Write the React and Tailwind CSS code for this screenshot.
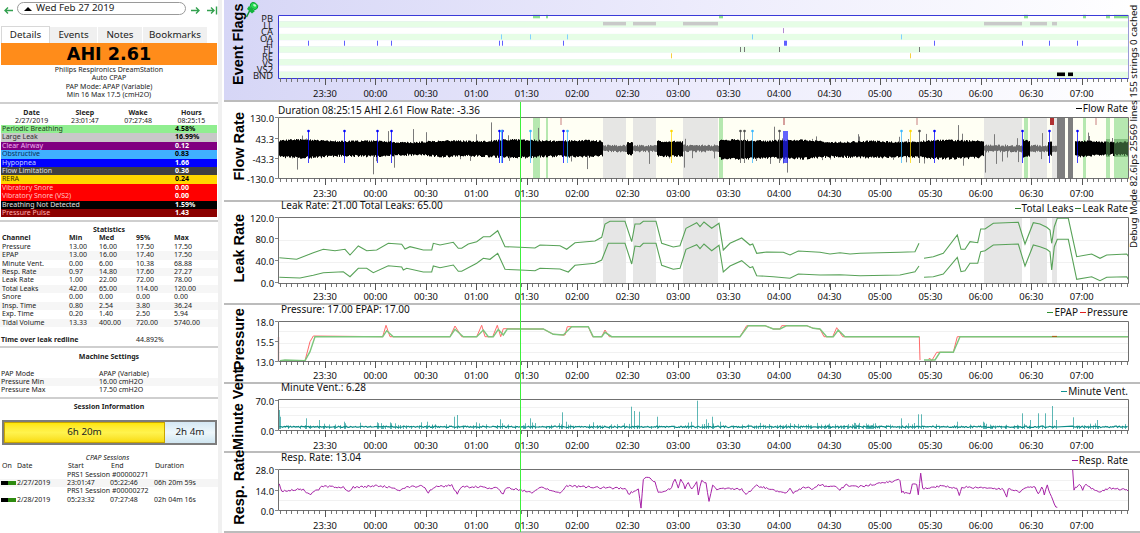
import { useMemo } from 'react';

// seeded random so the chart noise stays the same between runs
function rng(seed) {
  let a = seed;
  return () => {
    a = (a + 0x6d2b79f5) | 0;
    let t = Math.imul(a ^ (a >>> 15), 1 | a);
    t = (t + Math.imul(t ^ (t >>> 7), 61 | t)) ^ t;
    return ((t ^ (t >>> 14)) >>> 0) / 4294967296;
  };
}

// points read off 3x crops: flat [px, py, ...] -> page coords
const z = (ox, oy, arr) => {
  const out = [];
  for (let i = 0; i < arr.length; i += 2) out.push([ox + arr[i] / 3, oy + arr[i + 1] / 3]);
  return out;
};
const line = pts => 'M' + pts.map(p => `${p[0].toFixed(1)} ${p[1].toFixed(1)}`).join('L');

const TIMES = ['23:30', '00:00', '00:30', '01:00', '01:30', '02:00', '02:30', '03:00', '03:30', '04:00', '04:30', '05:00', '05:30', '06:00', '06:30', '07:00'];
const tx = i => 325 + 50.45 * i;
const L = 278, R = 1128;

const PB = [[533, 540], [546, 548], [719, 723], [1024, 1028], [1083, 1086], [1106, 1110], [1114, 1128]];
const LL = [[603, 626], [633, 656], [683, 718], [984, 1022], [1030, 1047], [1052, 1057]];
const BND = [[1057, 1065], [1068, 1073]];
const HYP = [308, 344, 377, 391, 499, 502, 563, 934, 1022, 1049, 1077];
const OA = [501, 530, 567, 752, 901];
const FL = [740, 744, 779, 919];
const RE = [671, 910];
const PP = [[561, 1], [784, 1.5], [917, 1], [1052, 4], [1096, 1]];

const inside = (x, ranges) => ranges.some(r => x >= r[0] && x <= r[1]);

function flowPaths() {
  const r = rng(7);
  let black = '', gray = '', spikes = '';
  for (let x = 279; x < R; x++) {
    if (inside(x, BND) || (x > 1057 && x < 1075 && r() < 0.85)) continue;
    const ll = inside(x, LL);
    const swell = 1 + 0.8 * Math.sin(x / 37) + 0.6 * Math.sin(x / 11.3);
    const extra = x > 720 && x < 980 ? 1.5 : 0;
    const up = ll ? 1.5 + r() * 2 : 5 + swell + r() * 1.8;
    const down = ll ? 1.5 + r() * 2 : 5 + swell + extra + r() * 2.4;
    const seg = `M${x + 0.5} ${(148 - up).toFixed(1)}V${(149 + down).toFixed(1)}`;
    if (ll) gray += seg; else black += seg;
    if (r() < 0.08) {
      const s = 9 + r() * r() * 20;
      spikes += r() < 0.55 ? `M${x + 0.5} 148V${(148 + s).toFixed(1)}` : `M${x + 0.5} 148V${(148 - s).toFixed(1)}`;
    }
  }
  return { black, gray, spikes };
}

const leakTop = [
  ...z(220, 200, [178, 173, 230, 178, 280, 158, 310, 148, 345, 152, 375, 148, 390, 165, 415, 138, 440, 152, 470, 150, 505, 130, 545, 133, 555, 147, 570, 140, 610, 150, 635, 150, 640, 130, 660, 135, 700, 127, 715, 145, 725, 145, 745, 132, 770, 125, 790, 110, 810, 110, 833, 92, 855, 140, 900, 142, 945, 144, 960, 135]),
  ...z(560, 100, [0, 437, 20, 448, 45, 428, 105, 423, 125, 412, 135, 372, 150, 364, 195, 364, 215, 425, 225, 372, 240, 372, 250, 364, 288, 364, 305, 430, 340, 441, 360, 437, 378, 385, 410, 368, 420, 380, 432, 366, 455, 385, 477, 370, 490, 450, 510, 430, 545, 414, 570, 435, 578, 432, 590, 460, 620, 456, 670, 457, 690, 465, 715, 453, 780, 457, 810, 462, 840, 458, 870, 462, 900, 460]),
  ...z(900, 200, [0, 157, 45, 155, 57, 130]),
];
const leakTop2 = z(900, 200, [72, 175, 100, 170, 130, 160, 172, 105, 183, 148, 195, 148, 210, 125, 233, 128, 242, 87, 255, 87, 280, 70, 355, 67, 375, 132, 400, 68, 420, 72, 440, 82, 450, 90, 455, 130, 463, 80, 472, 55, 505, 55, 530, 170, 575, 162, 600, 175, 620, 165, 680, 162, 686, 170]);
const leakLow = [
  ...z(220, 200, [178, 232, 240, 234, 280, 226, 310, 218, 370, 215, 390, 230, 415, 205, 440, 205, 460, 218, 505, 197, 545, 201, 550, 210, 560, 205, 610, 216, 635, 216, 640, 198, 660, 203, 700, 195, 715, 214, 725, 214, 770, 190, 790, 175, 810, 178, 833, 160, 855, 208, 900, 210, 945, 212, 960, 205]),
  ...z(560, 100, [0, 507, 25, 516, 45, 496, 105, 490, 125, 480, 145, 430, 195, 430, 215, 492, 225, 438, 240, 440, 250, 430, 288, 430, 305, 496, 340, 508, 360, 505, 378, 448, 410, 434, 420, 446, 432, 432, 455, 452, 477, 436, 490, 516, 510, 498, 545, 482, 570, 503, 578, 500, 590, 527, 640, 530, 690, 535, 715, 522, 780, 525, 840, 524, 900, 527]),
  ...z(900, 200, [0, 225, 45, 215, 57, 198]),
];
const leakLow2 = z(900, 200, [72, 232, 100, 230, 130, 222, 172, 172, 183, 215, 195, 212, 210, 190, 233, 190, 242, 155, 255, 152, 280, 135, 355, 132, 375, 198, 400, 135, 420, 140, 440, 148, 450, 155, 455, 210, 463, 140, 472, 118, 505, 118, 530, 238, 575, 230, 600, 242, 620, 232, 680, 230, 686, 240]);

const epap = [
  ...z(220, 200, [180, 482, 195, 480, 255, 482, 270, 455, 285, 410, 488, 410, 500, 392, 520, 410, 690, 410, 705, 388, 730, 410, 770, 410, 790, 390, 805, 410, 820, 410, 835, 388, 850, 405, 862, 387, 930, 387]),
  ...z(530, 305, [0, 72, 40, 72, 70, 88, 100, 90, 125, 65, 175, 65, 190, 95, 215, 95, 225, 82, 245, 95, 630, 95, 655, 62, 705, 62, 730, 72, 750, 72, 770, 62, 830, 62, 850, 70, 870, 72, 890, 95, 910, 95, 925, 75, 945, 95, 1168, 95]),
];
const epap2 = z(900, 200, [72, 480, 105, 480, 120, 457, 160, 457, 180, 410, 686, 410]);
const press = [
  ...z(220, 200, [255, 482, 270, 425, 280, 408, 488, 410, 498, 376, 510, 410, 690, 410, 705, 378, 725, 410, 770, 410, 785, 376, 795, 410, 818, 410, 832, 376, 842, 410, 850, 386, 930, 387]),
  ...z(530, 305, [0, 72, 40, 72, 70, 88, 105, 90, 112, 65, 175, 65, 188, 95, 215, 95, 225, 75, 238, 95, 630, 95, 650, 62, 705, 62, 730, 72, 750, 72, 755, 62, 830, 62, 850, 70, 870, 72, 882, 95, 908, 95, 920, 68, 938, 95, 1168, 95, 1170, 165]),
];
const press2 = z(900, 200, [85, 478, 90, 475, 95, 482, 110, 457, 160, 457, 172, 410, 686, 410]);

const ventSpikes = [
  ...z(220, 370, [178, 120, 181, 140, 257, 145, 298, 150, 372, 155, 375, 160, 470, 157, 512, 160, 540, 165, 603, 157, 622, 155, 703, 140, 710, 135, 840, 148, 845, 160, 915, 160, 930, 145]),
  ...z(560, 370, [5, 127, 18, 155, 100, 157, 213, 110, 222, 123, 238, 125, 292, 140, 410, 92, 438, 148, 455, 140, 480, 155]),
  ...z(900, 370, [2, 145, 25, 160, 55, 133, 62, 133, 172, 155, 248, 155, 365, 130, 390, 150, 415, 130, 435, 130, 455, 108, 468, 150, 520, 142, 590, 150, 685, 148]),
];

function ventPaths() {
  const r = rng(21);
  let base = '', bars = '';
  for (let x = 279; x < R; x++) {
    if (x > 1056 && x < 1072) continue;
    const y = 426.8 + (r() - 0.5) * 1.4;
    base += `${base ? 'L' : 'M'}${x + 0.5} ${y.toFixed(1)}`;
    const dense = x > 745 && x < 880 ? 0.45 : 0.16;
    if (r() < dense) bars += `M${x + 0.5} 429V${(426 - r() * r() * 5).toFixed(1)}`;
  }
  ventSpikes.forEach(p => { bars += `M${Math.round(p[0]) + 0.5} 429V${p[1].toFixed(1)}`; });
  return { base, bars };
}

function jitter(pts, seed, amt) {
  const r = rng(seed);
  const out = [];
  for (let i = 0; i < pts.length - 1; i++) {
    const [x0, y0] = pts[i], [x1, y1] = pts[i + 1];
    const n = Math.max(1, Math.round((x1 - x0) / 1.5));
    for (let k = 0; k < n; k++) {
      const t = k / n;
      out.push([x0 + (x1 - x0) * t, y0 + (y1 - y0) * t + (r() - 0.5) * amt]);
    }
  }
  out.push(pts[pts.length - 1]);
  return out;
}

const resp1 = [
  ...z(220, 370, [178, 340, 185, 365, 215, 360, 250, 358, 268, 375, 310, 348, 370, 352, 385, 365, 400, 352, 470, 348, 520, 352, 540, 362, 560, 352, 610, 348, 625, 368, 640, 352, 695, 346, 712, 372, 725, 350, 790, 352, 830, 355, 850, 372, 860, 352, 935, 368, 960, 352]),
  ...z(560, 370, [0, 370, 20, 348, 100, 352, 195, 355, 205, 372, 235, 358, 243, 412, 250, 330, 265, 320, 285, 335, 295, 370, 330, 358, 345, 330, 355, 352, 362, 325, 375, 355, 385, 335, 395, 360, 410, 332, 415, 375, 425, 330, 438, 340, 447, 395, 458, 345, 470, 360, 490, 355, 545, 358, 558, 372, 590, 348, 620, 355, 675, 370, 690, 355, 700, 368, 740, 350, 760, 358, 775, 345, 830, 350, 840, 358, 860, 345, 900, 350]),
  ...z(900, 370, [0, 330, 5, 365, 30, 372, 37, 345, 50, 345, 55, 375, 62, 310, 68, 355, 120, 348, 170, 355, 178, 375, 185, 352, 240, 352, 310, 358, 320, 378, 325, 358, 360, 365, 375, 352, 405, 348, 415, 372, 425, 350, 433, 372, 442, 345, 450, 370, 463, 405, 472, 412]),
];
const resp2 = z(900, 370, [518, 302, 522, 358, 538, 342, 548, 358, 558, 342, 570, 352, 595, 365, 630, 355, 680, 360, 686, 365]);

function Frame({ top, bottom, labelY, stroke = '#707070' }) {
  const minors = [];
  for (let x = tx(0) - 8 * 5.605; x < R + 1; x += 5.605) minors.push(x);
  return (
    <g>
      <path d={`M${L + 0.5} ${top + 0.5}H${R + 0.5}V${bottom + 0.5}H${L + 0.5}Z`} fill="none" stroke={stroke} strokeWidth="1" />
      <path d={minors.map(x => `M${Math.round(x) + 0.5} ${bottom}v4`).join('')} stroke="#666" strokeWidth="0.9" />
      <path d={TIMES.map((_, i) => `M${Math.round(tx(i)) + 0.5} ${bottom}v7`).join('')} stroke="#555" strokeWidth="1" />
      {TIMES.map((t, i) => (
        <text key={t + i} x={tx(i)} y={labelY} textAnchor="middle" dominantBaseline="middle" fontSize="9.4" fill="#111">{t}</text>
      ))}
    </g>
  );
}

function YLabels({ items }) {
  return items.map(([t, y]) => (
    <g key={t}>
      <text x="274" y={y} textAnchor="end" dominantBaseline="middle" fontSize="9.4" fill="#111">{t}</text>
      <path d={`M275 ${y - 1.5}h3`} stroke="#666" strokeWidth="0.8" />
    </g>
  ));
}

function Grid({ ys }) {
  return <path d={ys.map(y => `M${L} ${y + 0.5}H${R}`).join('')} stroke="#f1f1f1" strokeWidth="1" />;
}

function EventFlags() {
  const rows = ['PB', 'LL', 'CA', 'OA', 'H', 'FL', 'RE', 'VS', 'VS2', 'BND'];
  const labelY = [19.5, 26, 32.3, 39, 45, 50.7, 57.3, 64, 70.7, 76.7];
  const rh = 6.3;
  const rowY = i => 15 + i * rh;
  const marks = (xs, row, color) => xs.map(x => <rect key={`${row}-${x}`} x={x} y={rowY(row) + 0.5} width="1" height="5" fill={color} />);
  const spans = (rs, row, color, y = 0.2, h = 4) => rs.map(r => <rect key={`${row}-${r[0]}`} x={r[0]} y={rowY(row) + y} width={r[1] - r[0]} height={h} fill={color} />);
  return (
    <svg width="886" height="100" viewBox="254 0 886 100" className="block overflow-visible">
      {rows.map((_, i) => <rect key={i} x={L} y={rowY(i)} width={R - L} height={rh} fill={i % 2 ? '#e6fde6' : '#ffffff'} />)}
      {spans(PB, 0, '#8fe08f', -0.2, 3.5)}
      {spans(LL, 1, '#c9c9c9', 0.6, 3.5)}
      {marks([783], 2, '#b08ad0')}
      {marks(OA, 3, '#7fd0ff')}
      {marks(HYP, 4, '#5f5fff')}
      <rect x="784" y={rowY(4) + 0.5} width="3" height="5" fill="#5f5fff" />
      {marks(FL, 5, '#777')}
      {marks(RE, 6, '#f5d040')}
      {spans(BND, 9, '#000', 0.8, 3.6)}
      <path d={`M${L + 0.5} 78V15.5H${R}`} fill="none" stroke="#3a3ad8" strokeWidth="1" />
      <path d={`M${R + 0.5} 15V78`} stroke="#9a9ad8" strokeWidth="1" />
      <Frame top={78} bottom={78} labelY={94} stroke="#3a3ad8" />
      {rows.map((t, i) => (
        <text key={t} x="273" y={labelY[i]} textAnchor="end" dominantBaseline="middle" fontSize="9.4" fill="#222">{t}</text>
      ))}
    </svg>
  );
}

function FlowChart({ top, height }) {
  const d = useMemo(flowPaths, []);
  const pin = (x, color, w = 1) => (
    <g key={`${x}-${color}`}>
      <path d={`M${x + 0.5} 131V163`} stroke={color} strokeWidth={w} opacity="0.75" />
      <circle cx={x + 0.5} cy="131" r="1.3" fill={color} />
    </g>
  );
  return (
    <svg width="886" height={height} viewBox={`254 ${top} 886 ${height}`} className="block overflow-visible">
      <rect x={L} y="117" width={R - L} height="61" fill="#fffff4" />
      {LL.map(r => <rect key={r[0]} x={r[0]} y="117" width={r[1] - r[0]} height="61" fill="#e6e6e4" />)}
      {PB.map(r => <rect key={r[0]} x={r[0]} y="117" width={r[1] - r[0]} height="61" fill="#b6e8b0" />)}
      {BND.map(r => <rect key={r[0]} x={r[0]} y="117" width={r[1] - r[0]} height="61" fill="#7e7e7e" />)}
      <path d={d.spikes} stroke="#7a7a7a" strokeWidth="1" />
      <path d={d.gray} stroke="#6c6c6c" strokeWidth="1" />
      <path d={d.black} stroke="#000" strokeWidth="1" />
      {PB.filter(r => r[1] > 1100).map(r => <rect key={r[0]} x={r[0]} y="139" width={r[1] - r[0]} height="18" fill="#5a9a58" opacity="0.55" />)}
      {PP.map(([x, w]) => <path key={x} d={`M${x} 117V125`} stroke={w > 2 ? '#b03030' : '#c88080'} strokeWidth={w} />)}
      {HYP.map(x => pin(x, '#0000ff'))}
      {OA.map(x => pin(x, '#38b6ff'))}
      {RE.map(x => pin(x, '#ffd700'))}
      {FL.map(x => pin(x, '#505050'))}
      <rect x="783" y="131" width="5" height="32" fill="#2222ff" opacity="0.7" />
      <Frame top={117} bottom={178} labelY={194} />
      <YLabels items={[['130.0', 119], ['43.3', 140], ['-43.3', 160], ['-130.0', 180]]} />
    </svg>
  );
}

function LeakChart({ top, height }) {
  return (
    <svg width="886" height={height} viewBox={`254 ${top} 886 ${height}`} className="block overflow-visible">
      <Grid ys={[240, 262]} />
      {LL.map(r => <rect key={r[0]} x={r[0]} y="217" width={r[1] - r[0]} height="66" fill="#e6e6e6" />)}
      {[leakTop, leakTop2, leakLow, leakLow2].map((p, i) => (
        <path key={i} d={line(p)} fill="none" stroke="#58a258" strokeWidth="1.1" />
      ))}
      <Frame top={217} bottom={283} labelY={297} />
      <YLabels items={[['120.0', 219], ['80.0', 240], ['40.0', 262], ['0.0', 284]]} />
    </svg>
  );
}

function PressureChart({ top, height }) {
  return (
    <svg width="886" height={height} viewBox={`254 ${top} 886 ${height}`} className="block overflow-visible">
      <Grid ys={[331, 343, 352]} />
      <path d="M278.5 337V361" stroke="#d02020" strokeWidth="1.2" />
      <path d={line(press)} fill="none" stroke="#ff6a6a" strokeWidth="1" />
      <path d={line(press2)} fill="none" stroke="#ff6a6a" strokeWidth="1" />
      <path d={line(epap)} fill="none" stroke="#7cc67c" strokeWidth="1.4" />
      <path d={line(epap2)} fill="none" stroke="#7cc67c" strokeWidth="1.4" />
      <path d="M1052 336.4H1057" stroke="#a85a10" strokeWidth="1" />
      <Frame top={321} bottom={361} labelY={376} />
      <YLabels items={[['18.0', 323], ['15.5', 343], ['13.0', 363]]} />
    </svg>
  );
}

function VentChart({ top, height }) {
  const d = useMemo(ventPaths, []);
  return (
    <svg width="886" height={height} viewBox={`254 ${top} 886 ${height}`} className="block overflow-visible">
      <Grid ys={[407, 415]} />
      <path d={d.bars} stroke="#1a9a96" strokeWidth="1" opacity="0.7" />
      <path d={d.base} fill="none" stroke="#0c8c88" strokeWidth="1.2" />
      <Frame top={399} bottom={430} labelY={446} />
      <YLabels items={[['70.0', 402], ['0.0', 432]]} />
    </svg>
  );
}

function RespChart({ top, height }) {
  const a = useMemo(() => line(jitter(resp1, 5, 2.2)), []);
  const b = useMemo(() => line(jitter(resp2, 9, 2.2)), []);
  return (
    <svg width="886" height={height} viewBox={`254 ${top} 886 ${height}`} className="block overflow-visible">
      <Grid ys={[480, 490, 500]} />
      <path d={a} fill="none" stroke="#a622a6" strokeWidth="1" />
      <path d={b} fill="none" stroke="#a622a6" strokeWidth="1" />
      <Frame top={469} bottom={510} labelY={526} />
      <YLabels items={[['28.0', 471], ['14.0', 492], ['0.0', 512]]} />
    </svg>
  );
}

function Panel({ h, title, titleClass, left, legend, headH, leftClass = '', legendClass = '', children, bg = '' }) {
  return (
    <div className={`flex shrink-0 border-b-2 border-[#bcbcbc] ${bg}`} style={{ height: h }}>
      <div className="w-[30px] shrink-0 flex items-center justify-center">
        <span className={`inline-block -rotate-90 whitespace-nowrap font-bold text-[14.5px] leading-none text-black [font-family:'Liberation_Sans',sans-serif] ${titleClass}`}>{title}</span>
      </div>
      <div className="flex-1 min-w-0">
        {headH > 0 && (
          <div className="flex justify-between items-start text-[10px] leading-[8px] text-[#111] w-[874px]" style={{ height: headH }}>
            <span className={leftClass}>{left}</span>
            <span className={`flex gap-[2px] ${legendClass}`}>
              {legend.map(([name, color]) => (
                <span key={name} className="flex items-center gap-px">
                  <i className={`block w-[6px] h-px ${color}`} />
                  {name}
                </span>
              ))}
            </span>
          </div>
        )}
        {children}
      </div>
    </div>
  );
}

const INDICES = [
  ['Periodic Breathing', '4.58%', 'bg-[#90ee90]', 'text-[#1c3a1c]', 'text-black'],
  ['Large Leak', '16.99%', 'bg-[#c8c8c8]', 'text-[#303030]', 'text-black'],
  ['Clear Airway', '0.12', 'bg-[#800080]', 'text-[#f0b0f0]', 'text-white'],
  ['Obstructive', '0.83', 'bg-[#40b0ff]', 'text-[#08305a]', 'text-black'],
  ['Hypopnea', '1.66', 'bg-[#0000ff]', 'text-[#c0d0ff]', 'text-white'],
  ['Flow Limitation', '0.36', 'bg-[#404040]', 'text-[#e0e0e0]', 'text-white'],
  ['RERA', '0.24', 'bg-[#ffd700]', 'text-[#3a3000]', 'text-black'],
  ['Vibratory Snore', '0.00', 'bg-[#ff0000]', 'text-[#ffc0c0]', 'text-white'],
  ['Vibratory Snore (VS2)', '0.00', 'bg-[#ff0000]', 'text-[#ffc0c0]', 'text-white'],
  ['Breathing Not Detected', '1.59%', 'bg-black', 'text-[#e0e0e0]', 'text-white'],
  ['Pressure Pulse', '1.43', 'bg-[#8b0000]', 'text-[#ffb0b0]', 'text-white'],
];

const STATS = [
  ['Pressure', '13.00', '16.00', '17.50', '17.50'],
  ['EPAP', '13.00', '16.00', '17.40', '17.50'],
  ['Minute Vent.', '0.00', '6.00', '10.38', '68.88'],
  ['Resp. Rate', '0.97', '14.80', '17.60', '27.27'],
  ['Leak Rate', '1.00', '22.00', '72.00', '78.00'],
  ['Total Leaks', '42.00', '65.00', '114.00', '120.00'],
  ['Snore', '0.00', '0.00', '0.00', '0.00'],
  ['Insp. Time', '0.80', '2.54', '3.80', '36.24'],
  ['Exp. Time', '0.20', '1.40', '2.50', '5.94'],
  ['Tidal Volume', '13.33', '400.00', '720.00', '5740.00'],
];

function Rule() {
  return <div className="h-[2px] bg-[#cfcfcf] shrink-0" />;
}

function StatCols({ cells, className = '' }) {
  return (
    <div className={`grid grid-cols-[67px_30px_37px_38px_1fr] h-[8.45px] shrink-0 leading-[8.45px] pl-[2px] whitespace-nowrap ${className}`}>
      {cells.map((c, i) => <span key={i}>{c}</span>)}
    </div>
  );
}

function SessionRow({ id, date, start, end, dur, shade }) {
  return (
    <>
      <div className="h-[8.45px] shrink-0 leading-[8.45px] pl-[67px] whitespace-nowrap">PRS1 Session #{id}</div>
      <div className={`h-[8.45px] shrink-0 leading-[8.45px] flex items-center whitespace-nowrap ${shade ? 'bg-[#f5f5f5]' : ''}`}>
        <i className="block w-[7px] h-[4px] bg-black ml-px" />
        <i className="block w-[8px] h-[4px] bg-[#2e8b10]" />
        <span className="w-[51px] pl-px">{date}</span>
        <span className="w-[43px]">{start}</span>
        <span className="w-[44px]">{end}</span>
        <span>{dur}</span>
      </div>
    </>
  );
}

function Sidebar() {
  return (
    <aside className="w-[222px] h-[533px] shrink-0 flex flex-col bg-white border-r-[4px] border-[#f0f0f0] text-[7px] text-[#222]">
      {/* date nav */}
      <div className="h-[26px] shrink-0 flex items-start pt-[2px]">
        <svg width="11" height="11" viewBox="0 0 11 11" className="ml-[3px] mt-[3px]">
          <path d="M10 5.5H2M5 2.5L2 5.5L5 8.5" fill="none" stroke="#33a04f" strokeWidth="1.4" />
        </svg>
        <div className="ml-[3px] w-[169px] h-[13px] rounded-full border-[1.5px] border-[#9a9a9a] flex items-center pl-[6px] gap-[4px] text-[9.8px] text-[#222]">
          <span className="block w-0 h-0 border-x-[4px] border-x-transparent border-b-[4px] border-b-black" />
          Wed Feb 27 2019
        </div>
        <svg width="11" height="11" viewBox="0 0 11 11" className="ml-[4px] mt-[3px]">
          <path d="M1 5.5H9M6 2.5L9 5.5L6 8.5" fill="none" stroke="#33a04f" strokeWidth="1.4" />
        </svg>
        <svg width="11" height="11" viewBox="0 0 11 11" className="ml-[6px] mt-[3px]">
          <path d="M0 5.5H7M4 2.5L7 5.5L4 8.5M9.5 1.5V9.5" fill="none" stroke="#33a04f" strokeWidth="1.4" />
        </svg>
      </div>
      {/* tabs */}
      <div className="h-[17px] shrink-0 flex items-end text-[9.8px] text-[#222] pl-px">
        <div className="w-[49px] h-[17px] bg-white border border-b-0 border-[#d8d8d8] flex items-center justify-center">Details</div>
        <div className="w-[47px] h-[16px] bg-[#f0f0f0] flex items-center justify-center">Events</div>
        <div className="w-[45px] h-[16px] bg-[#f0f0f0] border-l border-white flex items-center justify-center">Notes</div>
        <div className="w-[65px] h-[16px] bg-[#f0f0f0] border-l border-white flex items-center justify-center">Bookmarks</div>
      </div>
      <div className="h-[22px] mx-px shrink-0 bg-[#ff8c1a] flex items-center justify-center font-bold text-[17.6px] text-black [font-family:'DejaVu_Sans',sans-serif]">AHI 2.61</div>
      <div className="h-[37px] shrink-0 pt-[1px] text-center leading-[8.45px]">
        <div>Philips Respironics DreamStation</div>
        <div>Auto CPAP</div>
        <div>PAP Mode: APAP (Variable)</div>
        <div>Min 16 Max 17.5 (cmH2O)</div>
      </div>
      <Rule />
      <div className="h-[21px] shrink-0 pt-[5px] pl-[5px] grid grid-cols-4 text-center leading-[8.45px]">
        {['Date', 'Sleep', 'Wake', 'Hours'].map(t => <b key={t} className="font-bold">{t}</b>)}
        {['2/27/2019', '23:01:47', '07:27:48', '08:25:15'].map(t => <span key={t}>{t}</span>)}
      </div>
      {INDICES.map(([name, value, bg, fg, vfg]) => (
        <div key={name} className={`h-[8.4px] shrink-0 leading-[8.4px] mx-px flex ${bg}`}>
          <span className={`w-[174px] pl-px ${fg}`}>{name}</span>
          <span className={`font-bold ${vfg}`}>{value}</span>
        </div>
      ))}
      <div className="h-[3px] shrink-0" />
      <Rule />
      <div className="h-[12px] shrink-0 pt-[3.5px] text-center font-bold leading-[8.45px]">Statistics</div>
      <StatCols cells={['Channel', 'Min', 'Med', '95%', 'Max']} className="font-bold" />
      {STATS.map((row, i) => <StatCols key={row[0]} cells={row} className={i % 2 ? 'bg-[#f6f6f6]' : ''} />)}
      <div className="h-[19px] shrink-0 pt-[8.5px] flex leading-[8.45px] pl-px">
        <b className="w-[135px] font-bold">Time over leak redline</b>
        <span>44.892%</span>
      </div>
      <Rule />
      <div className="h-[21.5px] shrink-0 pt-[4.5px] text-center font-bold leading-[8.45px]">Machine Settings</div>
      {[['PAP Mode', 'APAP (Variable)'], ['Pressure Min', '16.00 cmH2O'], ['Pressure Max', '17.50 cmH2O']].map(([k, v], i) => (
        <div key={k} className={`h-[8.45px] shrink-0 leading-[8.45px] flex pl-px ${i === 1 ? 'bg-[#f6f6f6]' : ''}`}>
          <span className="w-[98px]">{k}</span>
          <span>{v}</span>
        </div>
      ))}
      <div className="h-[2px] shrink-0" />
      <Rule />
      <div className="h-[20.7px] shrink-0 pt-[3.8px] text-center font-bold leading-[8.45px]">Session Information</div>
      <div className="h-[25px] shrink-0 ml-[2px] mr-px flex border-2 border-[#7d7d7d] text-[9.8px] text-[#222]">
        <div className="w-[161px] flex items-center justify-center border border-[#c8a400] bg-linear-to-b from-[#ffe600] via-[#fff34d] to-[#f8dc00]">6h 20m</div>
        <div className="flex-1 flex items-center justify-center bg-linear-to-b from-[#d4e8f4] via-[#eef7fb] to-[#cfe5f0]">2h 4m</div>
      </div>
      <div className="h-[9px] shrink-0 mt-[8.5px] text-center italic leading-[9px] pr-[3px]">CPAP Sessions</div>
      <div className="h-[8.45px] shrink-0 leading-[8.45px] flex pl-[2px]">
        <span className="w-[15px]">On</span>
        <span className="w-[51px]">Date</span>
        <span className="w-[43px]">Start</span>
        <span className="w-[44px]">End</span>
        <span>Duration</span>
      </div>
      <SessionRow id="00000271" date="2/27/2019" start="23:01:47" end="05:22:46" dur="06h 20m 59s" shade />
      <SessionRow id="00000272" date="2/28/2019" start="05:23:32" end="07:27:48" dur="02h 04m 16s" />
    </aside>
  );
}

export default function App() {
  return (
    <div className="w-[1140px] h-[533px] overflow-hidden flex bg-white [font-family:'Noto_Sans',sans-serif]">
      <Sidebar />
      <main className="relative flex-1 min-w-0 ml-[2px] flex flex-col">
        <Panel h={102} title="Event Flags" titleClass="mb-[11px]" headH={0} bg="bg-linear-to-r from-[#d6d6f6] via-[#ecebfc] to-white">
          <EventFlags />
        </Panel>
        <Panel h={100} title="Flow Rate" titleClass="mb-[10px]" headH={13} left="Duration 08:25:15 AHI 2.61 Flow Rate: -3.36" legend={[['Flow Rate', 'bg-black']]} leftClass="mt-[4px] ml-[24px]" legendClass="mt-[2px]">
          <FlowChart top={115} height={85} />
        </Panel>
        <Panel h={103} title="Leak Rate" titleClass="mb-[8px]" headH={13} left="Leak Rate: 21.00 Total Leaks: 65.00" legend={[['Total Leaks', 'bg-[#2f7f2f]'], ['Leak Rate', 'bg-[#2f7f2f]']]} leftClass="-mt-px ml-[27px]" legendClass="mt-[2px]">
          <LeakChart top={215} height={88} />
        </Panel>
        <Panel h={79} title="Pressure" titleClass="mb-[8px]" headH={13} left="Pressure: 17.00 EPAP: 17.00" legend={[['EPAP', 'bg-[#2f8f2f]'], ['Pressure', 'bg-[#e02020]']]} leftClass="ml-[27px]" legendClass="mt-[3px]">
          <PressureChart top={318} height={64} />
        </Panel>
        <Panel h={69} title="Minute Vent." titleClass="mb-[20px]" headH={13} left="Minute Vent.: 6.28" legend={[['Minute Vent.', 'bg-[#109090]']]} leftClass="-mt-px ml-[27px]" legendClass="mt-[3px]">
          <VentChart top={397} height={54} />
        </Panel>
        <Panel h={80} title="Resp. Rate" titleClass="mb-[10px]" headH={13} left="Resp. Rate: 13.04" legend={[['Resp. Rate', 'bg-[#a020a0]']]} leftClass="ml-[27px]" legendClass="mt-[3px]">
          <RespChart top={466} height={65} />
        </Panel>
        {/* session cursor */}
        <div className="absolute left-[296px] top-[102px] w-px h-[430px] bg-[#3cf03c]" />
        {/* debug overlay, reads bottom to top */}
        <div className="absolute right-[1px] top-[8px] h-[240px] [writing-mode:vertical-rl] rotate-180 text-[9.7px] leading-[10px] whitespace-nowrap text-[#111]">
          Debug Mode 82.6lps 25569 lines 155 strings 0 cached
        </div>
        {/* pushpin on the flags panel */}
        <svg width="14" height="18" viewBox="0 0 14 18" className="absolute left-[21px] top-[1px]">
          <path d="M6 7L1.5 16" stroke="#159a3a" strokeWidth="1.6" />
          <path d="M4 5L10 10L7 12.5L2 8Z" fill="#12b43c" />
          <ellipse cx="9" cy="5" rx="4" ry="3.2" transform="rotate(35 9 5)" fill="#24d850" stroke="#0c9a30" strokeWidth="0.8" />
          <ellipse cx="9.6" cy="4.4" rx="1.6" ry="1.1" transform="rotate(35 9.6 4.4)" fill="#c4f8cf" />
        </svg>
      </main>
    </div>
  );
}
